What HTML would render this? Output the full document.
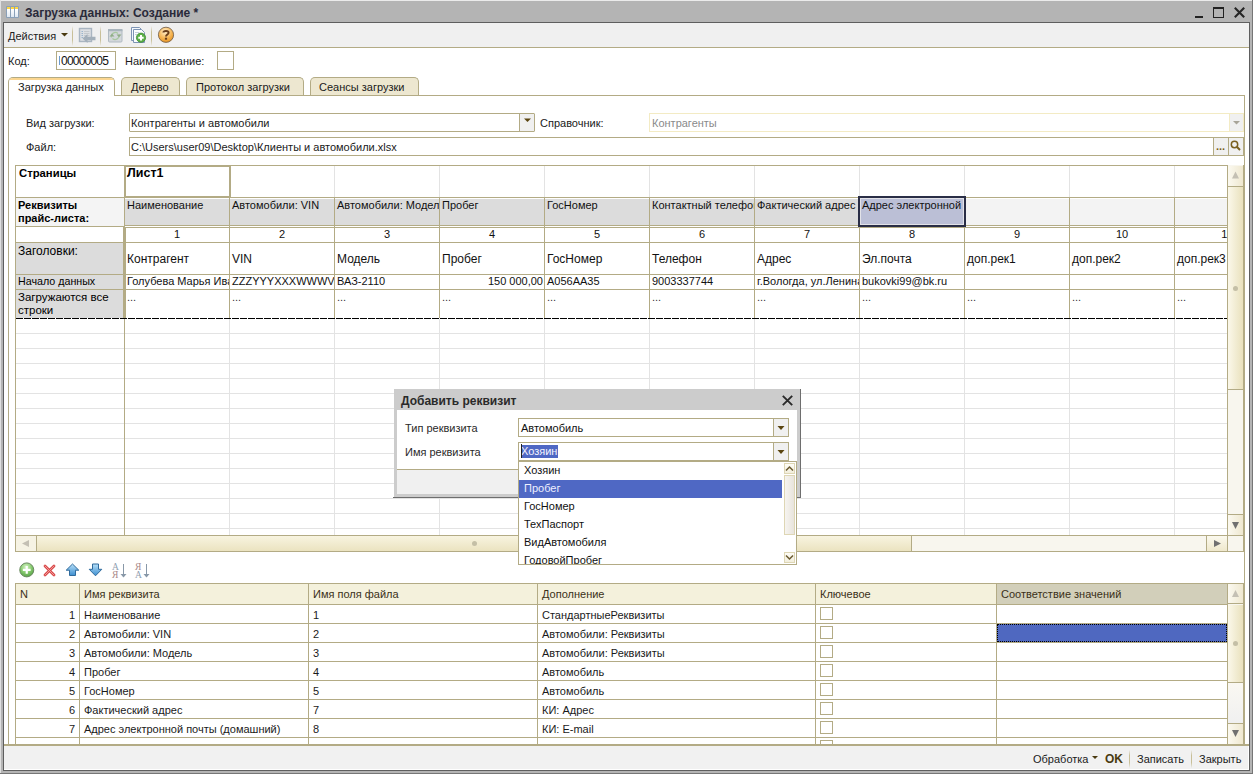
<!DOCTYPE html>
<html><head><meta charset="utf-8">
<style>
*{box-sizing:border-box;margin:0;padding:0}
html,body{width:1253px;height:774px;overflow:hidden}
body{position:relative;background:#b4b4b4;font-family:"Liberation Sans",sans-serif;font-size:11px;color:#1a1a1a}
.a{position:absolute}
.t{position:absolute;white-space:nowrap;line-height:11px;font-size:11px}
.b{border:1px solid #b3ab85}
.hl{position:absolute;height:1px;background:#b3ab85}
.vl{position:absolute;width:1px;background:#b3ab85}
.gh{position:absolute;height:1px;background:#e3e3e3}
.gv{position:absolute;width:1px;background:#e3e3e3}
.ddb{position:absolute;background:#f0f0f0;border-left:1px solid #b3ab85}
.tri{position:absolute;width:0;height:0;border-left:4px solid transparent;border-right:4px solid transparent;border-top:4px solid #5a4a10}
.sep{position:absolute;width:1px;background:linear-gradient(#f0f0f0,#c8bf98 30%,#c8bf98 70%,#f0f0f0)}
.tab{position:absolute;height:18px;border:1px solid #b3ab85;border-bottom:none;border-radius:5px 5px 0 0;background:#ede7d0}
</style></head><body>
<!-- window frame -->
<div class="a" style="left:0;top:0;width:1253px;height:1px;background:#ebebeb"></div>
<div class="a" style="left:0;top:0;width:1px;height:774px;background:#e0e0e0"></div>
<div class="a" style="left:1252px;top:0;width:1px;height:774px;background:#767676"></div>
<div class="a" style="left:0;top:773px;width:1253px;height:1px;background:#767676"></div>
<!-- title icon -->
<div class="a" style="left:6px;top:6px;width:13px;height:12px;background:#8aa0b8;border-radius:1px"></div>
<div class="a" style="left:7px;top:7px;width:3px;height:10px;background:linear-gradient(#ffd640 0,#ffd640 2px,#ffffff 2px,#dfe8f2)"></div>
<div class="a" style="left:11px;top:7px;width:3px;height:10px;background:linear-gradient(#ffd640 0,#ffd640 2px,#ffffff 2px,#dfe8f2)"></div>
<div class="a" style="left:15px;top:7px;width:3px;height:10px;background:linear-gradient(#ffd640 0,#ffd640 2px,#ffffff 2px,#dfe8f2)"></div>
<div class="t" style="left:25px;top:7px;font-size:12px;line-height:12px;font-weight:bold;color:#2a2a3a">Загрузка данных: Создание *</div>
<!-- window buttons -->
<div class="a" style="left:1195px;top:16px;width:8px;height:2px;background:#222"></div>
<div class="a" style="left:1213px;top:7px;width:11px;height:11px;border:1px solid #222;border-top-width:2px"></div>
<svg class="a" style="left:1233px;top:6px" width="13" height="13" viewBox="0 0 13 13"><path d="M1.8 1.8L11.2 11.2M11.2 1.8L1.8 11.2" stroke="#262626" stroke-width="2.1"/></svg>

<!-- content area -->
<div class="a" style="left:3px;top:22px;width:1247px;height:749px;border:1px solid #5e5e5e;background:#fff"></div>
<!-- toolbar -->
<div class="a" style="left:4px;top:23px;width:1245px;height:24px;background:#f0f0f0"></div>
<div class="hl" style="left:4px;top:47px;width:1245px"></div>
<div class="t" style="left:8px;top:31px;color:#222">Действия</div>
<svg class="a" style="left:61px;top:33px" width="9" height="5"><polygon points="0,0 7,0 3.5,3.5" fill="#4a3a10"/></svg>
<div class="sep" style="left:72px;top:26px;height:20px"></div>
<div class="sep" style="left:100px;top:26px;height:20px"></div>
<div class="sep" style="left:151px;top:26px;height:20px"></div>
<!-- icon 1 -->
<svg class="a" style="left:78px;top:27px" width="19" height="17" viewBox="0 0 19 17">
<rect x="1.5" y="1.5" width="12" height="13" fill="#dcdfe3" stroke="#a9b5c1" stroke-width="1.4"/>
<path d="M3.5 4.5h1.5M3.5 6.5h1.5M3.5 8.5h1.5M3.5 10.5h1.5" stroke="#9ab4cc" stroke-width="1"/>
<path d="M6 4.5h5.5M6 6.5h5.5M6 8.5h5.5" stroke="#c4c8cc" stroke-width="1"/>
<path d="M4.5 11.5L9.5 7V9.8H17.5V13.2H9.5V16Z" fill="#a3afba"/>
</svg>
<!-- icon 2 -->
<svg class="a" style="left:107px;top:28px" width="17" height="15" viewBox="0 0 17 15">
<rect x="1.5" y="1.5" width="13.5" height="12.5" rx="1" fill="#d3d7db" stroke="#b0bac2" stroke-width="1"/>
<rect x="1" y="1" width="14.5" height="2.2" fill="#a9b5bd"/>
<path d="M4.5 9.5A4 4 0 0 1 11 5.5M12 6.5A4 4 0 0 1 5.5 10.5" fill="none" stroke="#a8c8a0" stroke-width="1.2"/>
<path d="M2.5 8.5L5 5.8L7.5 8.5Z M9.5 6.5L12 9.2L14.5 6.5Z" fill="#90ac88"/>
</svg>
<!-- icon 3 -->
<svg class="a" style="left:130px;top:26px" width="18" height="18" viewBox="0 0 18 18">
<path d="M1.5 1.5H9.5L11 3V14.5H1.5Z" fill="#f4f8fc" stroke="#7d94b4" stroke-width="1"/>
<path d="M3.5 3.5H11.5L14.5 6.5V16.5H3.5Z" fill="#fbfdff" stroke="#7d94b4" stroke-width="1"/>
<path d="M5 6.5h4M5 8.5h2" stroke="#b8c4d0" stroke-width="0.8"/>
<circle cx="11" cy="11.7" r="4.6" fill="#5cb048" stroke="#3e8a34" stroke-width="0.8"/>
<path d="M11 9v5.4M8.3 11.7h5.4" stroke="#fff" stroke-width="2"/>
</svg>
<!-- help -->
<svg class="a" style="left:157px;top:26px" width="18" height="18" viewBox="0 0 18 18">
<defs><radialGradient id="hg" cx="45%" cy="30%" r="70%"><stop offset="0" stop-color="#fff0d0"/><stop offset="0.55" stop-color="#f8bc60"/><stop offset="1" stop-color="#e89420"/></radialGradient></defs>
<circle cx="9" cy="8.8" r="7.6" fill="url(#hg)" stroke="#7a6650" stroke-width="0.9"/>
<path d="M6.4 6.6C6.4 4.6 11.6 4.4 11.6 6.8C11.6 8.6 9 8.6 9 10.6" fill="none" stroke="#6a3e1a" stroke-width="1.9"/>
<rect x="7.9" y="11.7" width="2.2" height="2" fill="#6a3e1a"/>
</svg>

<!-- code row -->
<div class="t" style="left:8px;top:56px">Код:</div>
<div class="a b" style="left:56px;top:51px;width:60px;height:19px"></div>
<div class="t" style="left:61px;top:55px;font-size:12px;line-height:12px;color:#111;letter-spacing:-0.78px">00000005</div>
<div class="a" style="left:59px;top:56px;width:1px;height:9px;background:#6a9ad0"></div>
<div class="t" style="left:125px;top:56px">Наименование:</div>
<div class="a b" style="left:217px;top:51px;width:17px;height:19px"></div>

<!-- tabs -->
<div class="tab" style="left:121px;top:77px;width:59px"></div>
<div class="tab" style="left:186px;top:77px;width:118px"></div>
<div class="tab" style="left:310px;top:77px;width:109px"></div>
<div class="hl" style="left:8px;top:95px;width:1237px"></div>
<div class="tab" style="left:8px;top:77px;width:107px;height:19px;background:#fff;overflow:hidden"><div class="a" style="left:0;top:0;width:105px;height:2px;background:#fbd690"></div></div>
<div class="t" style="left:18px;top:82px">Загрузка данных</div>
<div class="t" style="left:131px;top:82px">Дерево</div>
<div class="t" style="left:196px;top:82px">Протокол загрузки</div>
<div class="t" style="left:319px;top:82px">Сеансы загрузки</div>
<!-- pane borders -->
<div class="vl" style="left:8px;top:95px;height:651px"></div>
<div class="vl" style="left:1244px;top:95px;height:651px"></div>
<div class="a" style="left:4px;top:744px;width:1245px;height:2px;background:#b3ab85"></div>
<!-- bottom bar -->
<div class="a" style="left:4px;top:746px;width:1245px;height:24px;background:#f1f1f1;border-right:1px solid #fff;border-bottom:1px solid #fff"></div>
<div class="t" style="left:1033px;top:754px">Обработка</div>
<svg class="a" style="left:1092px;top:756px" width="8" height="5"><polygon points="0,0 6,0 3,3" fill="#4a3a10"/></svg>
<div class="t" style="left:1105px;top:753px;font-weight:bold;font-size:12px;line-height:12px;color:#4a3a10">OK</div>
<div class="sep" style="left:1129px;top:750px;height:18px"></div>
<div class="t" style="left:1137px;top:754px">Записать</div>
<div class="sep" style="left:1191px;top:750px;height:18px"></div>
<div class="t" style="left:1199px;top:754px">Закрыть</div>

<!-- form rows -->
<div class="t" style="left:26px;top:118px">Вид загрузки:</div>
<div class="a b" style="left:129px;top:113px;width:406px;height:19px;border-radius:1px"></div>
<div class="ddb" style="left:519px;top:114px;width:15px;height:17px"></div>
<svg class="a" style="left:524px;top:118px" width="9" height="6"><polygon points="0,0.5 7,0.5 3.5,4" fill="#5a4510"/></svg>
<div class="t" style="left:131px;top:118px">Контрагенты и автомобили</div>
<div class="t" style="left:540px;top:118px">Справочник:</div>
<div class="a" style="left:649px;top:113px;width:595px;height:19px;border:1px solid #f3ebc4"></div>
<div class="a" style="left:1229px;top:114px;width:14px;height:17px;background:#f0f0f0;border-left:1px solid #f3ebc4"></div>
<svg class="a" style="left:1233px;top:121px" width="9" height="5"><polygon points="0,0 7,0 3.5,3.5" fill="#a8a498"/></svg>
<div class="t" style="left:652px;top:118px;color:#8a8a8a">Контрагенты</div>
<div class="t" style="left:26px;top:142px">Файл:</div>
<div class="a b" style="left:129px;top:137px;width:1115px;height:19px"></div>
<div class="ddb" style="left:1213px;top:138px;width:15px;height:17px"></div>
<div class="ddb" style="left:1228px;top:138px;width:15px;height:17px"></div>
<div class="t" style="left:1216px;top:141px;color:#7a6020;font-weight:bold">...</div>
<svg class="a" style="left:1230px;top:140px" width="11" height="11" viewBox="0 0 11 11"><circle cx="4.5" cy="4.5" r="3.2" fill="none" stroke="#7a6020" stroke-width="1.5"/><path d="M6.8 6.8L10 10" stroke="#7a6020" stroke-width="2"/></svg>
<div class="t" style="left:131px;top:142px">C:\Users\user09\Desktop\Клиенты и автомобили.xlsx</div>

<div class="a" style="left:15px;top:165px;width:1229px;height:387px;background:#fff;border:1px solid #b3ab85"></div>
<div class="a" style="left:16px;top:198px;width:108px;height:28px;background:#f4f4f4;"></div>
<div class="a" style="left:125px;top:199px;width:734px;height:26px;background:#dcdcdc;"></div>
<div class="a" style="left:965px;top:199px;width:262px;height:26px;background:#f3f3f3;"></div>
<div class="a" style="left:16px;top:243px;width:107px;height:31px;background:#dcdcdc;"></div>
<div class="a" style="left:16px;top:275px;width:107px;height:14px;background:#dcdcdc;"></div>
<div class="a" style="left:16px;top:290px;width:107px;height:28px;background:#dcdcdc;"></div>
<div class="a" style="left:16px;top:333px;width:1211px;height:1px;background:#e3e3e3;"></div>
<div class="a" style="left:16px;top:348px;width:1211px;height:1px;background:#e3e3e3;"></div>
<div class="a" style="left:16px;top:363px;width:1211px;height:1px;background:#e3e3e3;"></div>
<div class="a" style="left:16px;top:378px;width:1211px;height:1px;background:#e3e3e3;"></div>
<div class="a" style="left:16px;top:393px;width:1211px;height:1px;background:#e3e3e3;"></div>
<div class="a" style="left:16px;top:408px;width:1211px;height:1px;background:#e3e3e3;"></div>
<div class="a" style="left:16px;top:423px;width:1211px;height:1px;background:#e3e3e3;"></div>
<div class="a" style="left:16px;top:438px;width:1211px;height:1px;background:#e3e3e3;"></div>
<div class="a" style="left:16px;top:453px;width:1211px;height:1px;background:#e3e3e3;"></div>
<div class="a" style="left:16px;top:468px;width:1211px;height:1px;background:#e3e3e3;"></div>
<div class="a" style="left:16px;top:483px;width:1211px;height:1px;background:#e3e3e3;"></div>
<div class="a" style="left:16px;top:498px;width:1211px;height:1px;background:#e3e3e3;"></div>
<div class="a" style="left:16px;top:513px;width:1211px;height:1px;background:#e3e3e3;"></div>
<div class="a" style="left:16px;top:528px;width:1211px;height:1px;background:#e3e3e3;"></div>
<div class="a" style="left:334px;top:166px;width:1px;height:31px;background:#e3e3e3;"></div>
<div class="a" style="left:334px;top:319px;width:1px;height:216px;background:#e3e3e3;"></div>
<div class="a" style="left:439px;top:166px;width:1px;height:31px;background:#e3e3e3;"></div>
<div class="a" style="left:439px;top:319px;width:1px;height:216px;background:#e3e3e3;"></div>
<div class="a" style="left:544px;top:166px;width:1px;height:31px;background:#e3e3e3;"></div>
<div class="a" style="left:544px;top:319px;width:1px;height:216px;background:#e3e3e3;"></div>
<div class="a" style="left:649px;top:166px;width:1px;height:31px;background:#e3e3e3;"></div>
<div class="a" style="left:649px;top:319px;width:1px;height:216px;background:#e3e3e3;"></div>
<div class="a" style="left:754px;top:166px;width:1px;height:31px;background:#e3e3e3;"></div>
<div class="a" style="left:754px;top:319px;width:1px;height:216px;background:#e3e3e3;"></div>
<div class="a" style="left:859px;top:166px;width:1px;height:31px;background:#e3e3e3;"></div>
<div class="a" style="left:859px;top:319px;width:1px;height:216px;background:#e3e3e3;"></div>
<div class="a" style="left:964px;top:166px;width:1px;height:31px;background:#e3e3e3;"></div>
<div class="a" style="left:964px;top:319px;width:1px;height:216px;background:#e3e3e3;"></div>
<div class="a" style="left:1069px;top:166px;width:1px;height:31px;background:#e3e3e3;"></div>
<div class="a" style="left:1069px;top:319px;width:1px;height:216px;background:#e3e3e3;"></div>
<div class="a" style="left:1174px;top:166px;width:1px;height:31px;background:#e3e3e3;"></div>
<div class="a" style="left:1174px;top:319px;width:1px;height:216px;background:#e3e3e3;"></div>
<div class="a" style="left:124px;top:319px;width:1px;height:216px;background:#b3ab85;"></div>
<div class="a" style="left:229px;top:319px;width:1px;height:216px;background:#e3e3e3;"></div>
<div class="a" style="left:16px;top:197px;width:1211px;height:1px;background:#b3ab85;"></div>
<div class="a" style="left:124px;top:225px;width:1103px;height:1px;background:#b3ab85;"></div>
<div class="a" style="left:124px;top:227px;width:1103px;height:1px;background:#b3ab85;"></div>
<div class="a" style="left:16px;top:226px;width:108px;height:1px;background:#b3ab85;"></div>
<div class="a" style="left:16px;top:242px;width:1211px;height:1px;background:#b3ab85;"></div>
<div class="a" style="left:16px;top:274px;width:1211px;height:1px;background:#b3ab85;"></div>
<div class="a" style="left:16px;top:289px;width:1211px;height:1px;background:#b3ab85;"></div>
<div class="a" style="left:229px;top:197px;width:1px;height:121px;background:#b3ab85;"></div>
<div class="a" style="left:334px;top:197px;width:1px;height:121px;background:#b3ab85;"></div>
<div class="a" style="left:439px;top:197px;width:1px;height:121px;background:#b3ab85;"></div>
<div class="a" style="left:544px;top:197px;width:1px;height:121px;background:#b3ab85;"></div>
<div class="a" style="left:649px;top:197px;width:1px;height:121px;background:#b3ab85;"></div>
<div class="a" style="left:754px;top:197px;width:1px;height:121px;background:#b3ab85;"></div>
<div class="a" style="left:859px;top:197px;width:1px;height:121px;background:#b3ab85;"></div>
<div class="a" style="left:964px;top:197px;width:1px;height:121px;background:#b3ab85;"></div>
<div class="a" style="left:1069px;top:197px;width:1px;height:121px;background:#b3ab85;"></div>
<div class="a" style="left:1174px;top:197px;width:1px;height:121px;background:#b3ab85;"></div>
<div class="a" style="left:124px;top:166px;width:1px;height:31px;background:#b3ab85;"></div>
<div class="a" style="left:123px;top:227px;width:3px;height:91px;background:#b3ab85;"></div>
<div class="a" style="left:124px;top:197px;width:1px;height:30px;background:#b3ab85;"></div>
<div class="a" style="left:124px;top:165px;width:107px;height:2px;background:#b3ab85;"></div>
<div class="a" style="left:124px;top:196px;width:107px;height:2px;background:#b3ab85;"></div>
<div class="a" style="left:124px;top:165px;width:2px;height:33px;background:#b3ab85;"></div>
<div class="a" style="left:229px;top:165px;width:2px;height:33px;background:#b3ab85;"></div>
<div class="a" style="left:16px;top:318px;width:1211px;height:1px;background:repeating-linear-gradient(90deg,#000 0,#000 7px,transparent 7px,transparent 8px)"></div>
<div class="a" style="left:858px;top:196px;width:108px;height:31px;background:#bbbfd6;border:2px solid #2a2e46;box-shadow:inset 0 0 0 1px #e2e2e8"></div>
<div class="t" style="left:19px;top:168.43px;font-size:11.3px;line-height:11.3px;font-weight:bold;color:#000;">Страницы</div>
<div class="t" style="left:18px;top:199.69px;font-size:11px;line-height:11px;font-weight:bold;color:#000;">Реквизиты</div>
<div class="t" style="left:18px;top:212.69px;font-size:11px;line-height:11px;font-weight:bold;color:#000;">прайс-листа:</div>
<div class="t" style="left:18px;top:244.84px;font-size:12px;line-height:12px;color:#000;">Заголовки:</div>
<div class="t" style="left:18px;top:276.44px;font-size:10.7px;line-height:10.7px;color:#000;">Начало данных</div>
<div class="t" style="left:18px;top:292.27px;font-size:11.5px;line-height:11.5px;color:#000;">Загружаются все</div>
<div class="t" style="left:18px;top:304.77px;font-size:11.5px;line-height:11.5px;color:#000;">строки</div>
<div class="t" style="left:127px;top:167.42px;font-size:12.5px;line-height:12.5px;font-weight:bold;color:#000;">Лист1</div>
<div class="a" style="left:125px;top:199px;width:104px;height:26px;overflow:hidden">
<div class="t" style="left:2px;top:0.69px;color:#111">Наименование</div>
</div>
<div class="a" style="left:230px;top:199px;width:104px;height:26px;overflow:hidden">
<div class="t" style="left:2px;top:0.69px;color:#111">Автомобили: VIN</div>
</div>
<div class="a" style="left:335px;top:199px;width:104px;height:26px;overflow:hidden">
<div class="t" style="left:2px;top:0.69px;color:#111">Автомобили: Модель</div>
</div>
<div class="a" style="left:440px;top:199px;width:104px;height:26px;overflow:hidden">
<div class="t" style="left:2px;top:0.69px;color:#111">Пробег</div>
</div>
<div class="a" style="left:545px;top:199px;width:104px;height:26px;overflow:hidden">
<div class="t" style="left:2px;top:0.69px;color:#111">ГосНомер</div>
</div>
<div class="a" style="left:650px;top:199px;width:104px;height:26px;overflow:hidden">
<div class="t" style="left:2px;top:0.69px;color:#111">Контактный телефон</div>
</div>
<div class="a" style="left:755px;top:199px;width:104px;height:26px;overflow:hidden">
<div class="t" style="left:2px;top:0.69px;color:#111">Фактический адрес</div>
</div>
<div class="a" style="left:860px;top:199px;width:104px;height:26px;overflow:hidden">
<div class="t" style="left:2px;top:0.69px;color:#111">Адрес электронной почты</div>
</div>
<div class="a" style="left:125px;top:228px;width:104px;height:14px;overflow:hidden">
<div class="t" style="left:0;width:104px;text-align:center;top:0.69px;color:#111">1</div>
</div>
<div class="a" style="left:125px;top:243px;width:104px;height:31px;overflow:hidden">
<div class="t" style="left:2px;top:9.84px;font-size:12px;line-height:12px;color:#111">Контрагент</div>
</div>
<div class="a" style="left:125px;top:290px;width:104px;height:28px;overflow:hidden">
<div class="t" style="left:2px;top:1.69px;color:#333">...</div>
</div>
<div class="a" style="left:230px;top:228px;width:104px;height:14px;overflow:hidden">
<div class="t" style="left:0;width:104px;text-align:center;top:0.69px;color:#111">2</div>
</div>
<div class="a" style="left:230px;top:243px;width:104px;height:31px;overflow:hidden">
<div class="t" style="left:2px;top:9.84px;font-size:12px;line-height:12px;color:#111">VIN</div>
</div>
<div class="a" style="left:230px;top:290px;width:104px;height:28px;overflow:hidden">
<div class="t" style="left:2px;top:1.69px;color:#333">...</div>
</div>
<div class="a" style="left:335px;top:228px;width:104px;height:14px;overflow:hidden">
<div class="t" style="left:0;width:104px;text-align:center;top:0.69px;color:#111">3</div>
</div>
<div class="a" style="left:335px;top:243px;width:104px;height:31px;overflow:hidden">
<div class="t" style="left:2px;top:9.84px;font-size:12px;line-height:12px;color:#111">Модель</div>
</div>
<div class="a" style="left:335px;top:290px;width:104px;height:28px;overflow:hidden">
<div class="t" style="left:2px;top:1.69px;color:#333">...</div>
</div>
<div class="a" style="left:440px;top:228px;width:104px;height:14px;overflow:hidden">
<div class="t" style="left:0;width:104px;text-align:center;top:0.69px;color:#111">4</div>
</div>
<div class="a" style="left:440px;top:243px;width:104px;height:31px;overflow:hidden">
<div class="t" style="left:2px;top:9.84px;font-size:12px;line-height:12px;color:#111">Пробег</div>
</div>
<div class="a" style="left:440px;top:290px;width:104px;height:28px;overflow:hidden">
<div class="t" style="left:2px;top:1.69px;color:#333">...</div>
</div>
<div class="a" style="left:545px;top:228px;width:104px;height:14px;overflow:hidden">
<div class="t" style="left:0;width:104px;text-align:center;top:0.69px;color:#111">5</div>
</div>
<div class="a" style="left:545px;top:243px;width:104px;height:31px;overflow:hidden">
<div class="t" style="left:2px;top:9.84px;font-size:12px;line-height:12px;color:#111">ГосНомер</div>
</div>
<div class="a" style="left:545px;top:290px;width:104px;height:28px;overflow:hidden">
<div class="t" style="left:2px;top:1.69px;color:#333">...</div>
</div>
<div class="a" style="left:650px;top:228px;width:104px;height:14px;overflow:hidden">
<div class="t" style="left:0;width:104px;text-align:center;top:0.69px;color:#111">6</div>
</div>
<div class="a" style="left:650px;top:243px;width:104px;height:31px;overflow:hidden">
<div class="t" style="left:2px;top:9.84px;font-size:12px;line-height:12px;color:#111">Телефон</div>
</div>
<div class="a" style="left:650px;top:290px;width:104px;height:28px;overflow:hidden">
<div class="t" style="left:2px;top:1.69px;color:#333">...</div>
</div>
<div class="a" style="left:755px;top:228px;width:104px;height:14px;overflow:hidden">
<div class="t" style="left:0;width:104px;text-align:center;top:0.69px;color:#111">7</div>
</div>
<div class="a" style="left:755px;top:243px;width:104px;height:31px;overflow:hidden">
<div class="t" style="left:2px;top:9.84px;font-size:12px;line-height:12px;color:#111">Адрес</div>
</div>
<div class="a" style="left:755px;top:290px;width:104px;height:28px;overflow:hidden">
<div class="t" style="left:2px;top:1.69px;color:#333">...</div>
</div>
<div class="a" style="left:860px;top:228px;width:104px;height:14px;overflow:hidden">
<div class="t" style="left:0;width:104px;text-align:center;top:0.69px;color:#111">8</div>
</div>
<div class="a" style="left:860px;top:243px;width:104px;height:31px;overflow:hidden">
<div class="t" style="left:2px;top:9.84px;font-size:12px;line-height:12px;color:#111">Эл.почта</div>
</div>
<div class="a" style="left:860px;top:290px;width:104px;height:28px;overflow:hidden">
<div class="t" style="left:2px;top:1.69px;color:#333">...</div>
</div>
<div class="a" style="left:965px;top:228px;width:104px;height:14px;overflow:hidden">
<div class="t" style="left:0;width:104px;text-align:center;top:0.69px;color:#111">9</div>
</div>
<div class="a" style="left:965px;top:243px;width:104px;height:31px;overflow:hidden">
<div class="t" style="left:2px;top:9.84px;font-size:12px;line-height:12px;color:#111">доп.рек1</div>
</div>
<div class="a" style="left:965px;top:290px;width:104px;height:28px;overflow:hidden">
<div class="t" style="left:2px;top:1.69px;color:#333">...</div>
</div>
<div class="a" style="left:1070px;top:228px;width:104px;height:14px;overflow:hidden">
<div class="t" style="left:0;width:104px;text-align:center;top:0.69px;color:#111">10</div>
</div>
<div class="a" style="left:1070px;top:243px;width:104px;height:31px;overflow:hidden">
<div class="t" style="left:2px;top:9.84px;font-size:12px;line-height:12px;color:#111">доп.рек2</div>
</div>
<div class="a" style="left:1070px;top:290px;width:104px;height:28px;overflow:hidden">
<div class="t" style="left:2px;top:1.69px;color:#333">...</div>
</div>
<div class="a" style="left:1175px;top:228px;width:52px;height:14px;overflow:hidden">
<div class="t" style="left:0;width:104px;text-align:center;top:0.69px;color:#111">11</div>
</div>
<div class="a" style="left:1175px;top:243px;width:52px;height:31px;overflow:hidden">
<div class="t" style="left:2px;top:9.84px;font-size:12px;line-height:12px;color:#111">доп.рек3</div>
</div>
<div class="a" style="left:1175px;top:290px;width:52px;height:28px;overflow:hidden">
<div class="t" style="left:2px;top:1.69px;color:#333">...</div>
</div>
<div class="a" style="left:125px;top:275px;width:104px;height:14px;overflow:hidden">
<div class="t" style="left:2px;top:1.19px;color:#111">Голубева Марья Ивановна</div>
</div>
<div class="a" style="left:230px;top:275px;width:104px;height:14px;overflow:hidden">
<div class="t" style="left:2px;top:1.19px;color:#111">ZZZYYYXXXWWWVVV</div>
</div>
<div class="a" style="left:335px;top:275px;width:104px;height:14px;overflow:hidden">
<div class="t" style="left:2px;top:1.19px;color:#111">ВАЗ-2110</div>
</div>
<div class="a" style="left:440px;top:275px;width:104px;height:14px;overflow:hidden">
<div class="t" style="right:1px;top:1.19px;color:#111">150 000,00</div>
</div>
<div class="a" style="left:545px;top:275px;width:104px;height:14px;overflow:hidden">
<div class="t" style="left:2px;top:1.19px;color:#111">А056АА35</div>
</div>
<div class="a" style="left:650px;top:275px;width:104px;height:14px;overflow:hidden">
<div class="t" style="left:2px;top:1.19px;color:#111">9003337744</div>
</div>
<div class="a" style="left:755px;top:275px;width:104px;height:14px;overflow:hidden">
<div class="t" style="left:2px;top:1.19px;color:#111">г.Вологда, ул.Ленина, 1</div>
</div>
<div class="a" style="left:860px;top:275px;width:104px;height:14px;overflow:hidden">
<div class="t" style="left:2px;top:1.19px;color:#111">bukovki99@bk.ru</div>
</div>
<div class="a" style="left:1227px;top:165px;width:17px;height:371px;background:#f8f6ee;border-left:1px solid #b3ab85;border-right:1px solid #b3ab85"></div>
<div class="a" style="left:1228px;top:166px;width:15px;height:21px;background:linear-gradient(90deg,#fbf9f0,#efe8d0);border-bottom:1px solid #b3ab85"></div>
<svg class="a" style="left:1232px;top:171px" width="9" height="9"><polygon points="0,7.5 7,7.5 3.5,0.5" fill="#c4c0b4"/></svg>
<div class="a" style="left:1228px;top:187px;width:15px;height:203px;background:linear-gradient(90deg,#fbf8ea,#e9e1bd);border-bottom:1px solid #b3ab85"></div>
<div class="a" style="left:1228px;top:514px;width:15px;height:21px;background:linear-gradient(90deg,#fbf9f0,#efe8d0);border-top:1px solid #b3ab85"></div>
<svg class="a" style="left:1232px;top:522px" width="9" height="9"><polygon points="0,0 7,0 3.5,7" fill="#707070"/></svg>
<div class="a" style="left:15px;top:535px;width:1229px;height:17px;background:#f8f6ee;border:1px solid #b3ab85"></div>
<div class="a" style="left:16px;top:536px;width:21px;height:15px;background:#f6f3e4;border-right:1px solid #b3ab85"></div>
<svg class="a" style="left:22px;top:540px" width="9" height="9"><polygon points="7,0 7,7 0,3.5" fill="#c4c0b4"/></svg>
<div class="a" style="left:37px;top:536px;width:875px;height:15px;background:linear-gradient(#f8f4e0,#ebe3c0);border-right:1px solid #b3ab85"></div>
<div class="a" style="left:1206px;top:536px;width:21px;height:15px;background:linear-gradient(#fbf9ee,#efe8cc);border-left:1px solid #b3ab85"></div>
<svg class="a" style="left:1214px;top:540px" width="9" height="9"><polygon points="0,0 0,7 7,3.5" fill="#707070"/></svg>
<div class="a" style="left:1227px;top:536px;width:16px;height:15px;background:#f8f6ee;border-left:1px solid #b3ab85"></div>
<div class="a" style="left:472px;top:541px;width:5px;height:5px;background:#c4bfa6;border-radius:50%"></div>
<div class="a" style="left:1233px;top:286px;width:5px;height:5px;background:#c4bfa6;border-radius:50%"></div>

<svg class="a" style="left:18px;top:561px" width="18" height="18" viewBox="0 0 18 18"><defs><radialGradient id="gp" cx="45%" cy="30%" r="70%"><stop offset="0" stop-color="#d8f4c8"/><stop offset="0.55" stop-color="#88cc70"/><stop offset="1" stop-color="#58a048"/></radialGradient></defs><circle cx="8.75" cy="8.9" r="7" fill="url(#gp)" stroke="#6a8a60" stroke-width="1"/><path d="M8.75 5v7.8M4.85 8.9h7.8" stroke="#fff" stroke-width="2.2"/></svg>
<svg class="a" style="left:43px;top:564px" width="14" height="14" viewBox="0 0 14 14"><path d="M2 2L11 11M11 2L2 11" stroke="#d84848" stroke-width="2.8" stroke-linecap="round"/><path d="M2 2L11 11M11 2L2 11" stroke="#f4a0a0" stroke-width="0.9" stroke-linecap="round"/></svg>
<svg class="a" style="left:65px;top:563px" width="15" height="14" viewBox="0 0 15 14"><defs><linearGradient id="ba" x1="0" y1="0" x2="0" y2="1"><stop offset="0" stop-color="#b8e0f8"/><stop offset="1" stop-color="#3c8ed0"/></linearGradient></defs><path d="M7.5 1L13.8 7.2H10.5V12.5H4.5V7.2H1.2Z" fill="url(#ba)" stroke="#2f6a9c" stroke-width="1"/></svg>
<svg class="a" style="left:88px;top:563px" width="15" height="14" viewBox="0 0 15 14"><defs><linearGradient id="bb" x1="0" y1="0" x2="0" y2="1"><stop offset="0" stop-color="#b8e0f8"/><stop offset="1" stop-color="#3c8ed0"/></linearGradient></defs><path d="M7.5 12.8L13.8 6.3H10.5V1H4.5V6.3H1.2Z" fill="url(#bb)" stroke="#2f6a9c" stroke-width="1"/></svg>
<svg class="a" style="left:111px;top:561px" width="18" height="19" viewBox="0 0 18 19"><text x="1" y="9" font-family="Liberation Serif" font-size="9.5" fill="#90a0b0">A</text><text x="1" y="17" font-family="Liberation Serif" font-size="9.5" fill="#a88888">Я</text><path d="M12.5 3v11" stroke="#8898a8" stroke-width="1"/><path d="M9.5 13L12.5 16.5L15.5 13Z" fill="#8898a8"/></svg>
<svg class="a" style="left:134px;top:561px" width="18" height="19" viewBox="0 0 18 19"><text x="1" y="9" font-family="Liberation Serif" font-size="9.5" fill="#a88888">Я</text><text x="1" y="17" font-family="Liberation Serif" font-size="9.5" fill="#90a0b0">A</text><path d="M12.5 3v11" stroke="#8898a8" stroke-width="1"/><path d="M9.5 13L12.5 16.5L15.5 13Z" fill="#8898a8"/></svg>
<div class="a" style="left:15px;top:583px;width:1229px;height:163px;background:#fff;border:1px solid #b3ab85;border-bottom:none"></div>
<div class="a" style="left:16px;top:584px;width:980px;height:20px;background:#f4f1dc;"></div>
<div class="a" style="left:997px;top:584px;width:230px;height:20px;background:#d2cfba;"></div>
<div class="a" style="left:16px;top:604px;width:1211px;height:1px;background:#b3ab85;"></div>
<div class="a" style="left:16px;top:623px;width:1211px;height:1px;background:#b3ab85;"></div>
<div class="a" style="left:16px;top:642px;width:1211px;height:1px;background:#b3ab85;"></div>
<div class="a" style="left:16px;top:661px;width:1211px;height:1px;background:#b3ab85;"></div>
<div class="a" style="left:16px;top:680px;width:1211px;height:1px;background:#b3ab85;"></div>
<div class="a" style="left:16px;top:699px;width:1211px;height:1px;background:#b3ab85;"></div>
<div class="a" style="left:16px;top:718px;width:1211px;height:1px;background:#b3ab85;"></div>
<div class="a" style="left:16px;top:737px;width:1211px;height:1px;background:#b3ab85;"></div>
<div class="a" style="left:79px;top:584px;width:1px;height:161px;background:#b3ab85;"></div>
<div class="a" style="left:308px;top:584px;width:1px;height:161px;background:#b3ab85;"></div>
<div class="a" style="left:537px;top:584px;width:1px;height:161px;background:#b3ab85;"></div>
<div class="a" style="left:815px;top:584px;width:1px;height:161px;background:#b3ab85;"></div>
<div class="a" style="left:996px;top:584px;width:1px;height:161px;background:#b3ab85;"></div>
<div class="t" style="left:20px;top:588.69px;font-size:11px;line-height:11px;color:#3a3018;">N</div>
<div class="t" style="left:84px;top:588.69px;font-size:11px;line-height:11px;color:#3a3018;">Имя реквизита</div>
<div class="t" style="left:313px;top:588.69px;font-size:11px;line-height:11px;color:#3a3018;">Имя поля файла</div>
<div class="t" style="left:542px;top:588.69px;font-size:11px;line-height:11px;color:#3a3018;">Дополнение</div>
<div class="t" style="left:820px;top:588.69px;font-size:11px;line-height:11px;color:#3a3018;">Ключевое</div>
<div class="t" style="left:1001px;top:588.69px;font-size:11px;line-height:11px;color:#3a3018;">Соответствие значений</div>
<div class="t" style="left:16px;width:59px;text-align:right;top:609.69px">1</div>
<div class="t" style="left:84px;top:609.69px;font-size:11px;line-height:11px;">Наименование</div>
<div class="t" style="left:313px;top:609.69px;font-size:11px;line-height:11px;">1</div>
<div class="t" style="left:542px;top:609.69px;font-size:11px;line-height:11px;">СтандартныеРеквизиты</div>
<div class="t" style="left:16px;width:59px;text-align:right;top:628.69px">2</div>
<div class="t" style="left:84px;top:628.69px;font-size:11px;line-height:11px;">Автомобили: VIN</div>
<div class="t" style="left:313px;top:628.69px;font-size:11px;line-height:11px;">2</div>
<div class="t" style="left:542px;top:628.69px;font-size:11px;line-height:11px;">Автомобили: Реквизиты</div>
<div class="t" style="left:16px;width:59px;text-align:right;top:647.69px">3</div>
<div class="t" style="left:84px;top:647.69px;font-size:11px;line-height:11px;">Автомобили: Модель</div>
<div class="t" style="left:313px;top:647.69px;font-size:11px;line-height:11px;">3</div>
<div class="t" style="left:542px;top:647.69px;font-size:11px;line-height:11px;">Автомобили: Реквизиты</div>
<div class="t" style="left:16px;width:59px;text-align:right;top:666.69px">4</div>
<div class="t" style="left:84px;top:666.69px;font-size:11px;line-height:11px;">Пробег</div>
<div class="t" style="left:313px;top:666.69px;font-size:11px;line-height:11px;">4</div>
<div class="t" style="left:542px;top:666.69px;font-size:11px;line-height:11px;">Автомобиль</div>
<div class="t" style="left:16px;width:59px;text-align:right;top:685.69px">5</div>
<div class="t" style="left:84px;top:685.69px;font-size:11px;line-height:11px;">ГосНомер</div>
<div class="t" style="left:313px;top:685.69px;font-size:11px;line-height:11px;">5</div>
<div class="t" style="left:542px;top:685.69px;font-size:11px;line-height:11px;">Автомобиль</div>
<div class="t" style="left:16px;width:59px;text-align:right;top:704.69px">6</div>
<div class="t" style="left:84px;top:704.69px;font-size:11px;line-height:11px;">Фактический адрес</div>
<div class="t" style="left:313px;top:704.69px;font-size:11px;line-height:11px;">7</div>
<div class="t" style="left:542px;top:704.69px;font-size:11px;line-height:11px;">КИ: Адрес</div>
<div class="t" style="left:16px;width:59px;text-align:right;top:723.69px">7</div>
<div class="t" style="left:84px;top:723.69px;font-size:11px;line-height:11px;">Адрес электронной почты (домашний)</div>
<div class="t" style="left:313px;top:723.69px;font-size:11px;line-height:11px;">8</div>
<div class="t" style="left:542px;top:723.69px;font-size:11px;line-height:11px;">КИ: E-mail</div>
<div class="a" style="left:820px;top:607px;width:13px;height:13px;background:#fff;border:1px solid #b3ab85"></div>
<div class="a" style="left:820px;top:626px;width:13px;height:13px;background:#fff;border:1px solid #b3ab85"></div>
<div class="a" style="left:820px;top:645px;width:13px;height:13px;background:#fff;border:1px solid #b3ab85"></div>
<div class="a" style="left:820px;top:664px;width:13px;height:13px;background:#fff;border:1px solid #b3ab85"></div>
<div class="a" style="left:820px;top:683px;width:13px;height:13px;background:#fff;border:1px solid #b3ab85"></div>
<div class="a" style="left:820px;top:702px;width:13px;height:13px;background:#fff;border:1px solid #b3ab85"></div>
<div class="a" style="left:820px;top:721px;width:13px;height:13px;background:#fff;border:1px solid #b3ab85"></div>
<div class="a" style="left:820px;top:740px;width:13px;height:4px;background:#fff;border:1px solid #b3ab85;border-bottom:none"></div>
<div class="a" style="left:997px;top:624px;width:230px;height:18px;background:#4f68c0;outline:1px dotted #000;outline-offset:-1px"></div>
<div class="a" style="left:1227px;top:583px;width:17px;height:162px;background:#f8f6ee;border-left:1px solid #b3ab85;border-right:1px solid #b3ab85;border-top:1px solid #b3ab85"></div>
<div class="a" style="left:1228px;top:584px;width:15px;height:20px;background:linear-gradient(90deg,#fbf9f0,#efe8d0);border-bottom:1px solid #b3ab85"></div>
<svg class="a" style="left:1232px;top:590px" width="9" height="9"><polygon points="0,7 7,7 3.5,0" fill="#c4c0b4"/></svg>
<div class="a" style="left:1228px;top:605px;width:15px;height:78px;background:linear-gradient(90deg,#fbf8ea,#e9e1bd);border-bottom:1px solid #b3ab85"></div>
<div class="a" style="left:1228px;top:683px;width:15px;height:40px;background:linear-gradient(#faf8f2,#f0f0f0);"></div>
<div class="a" style="left:1233px;top:641px;width:5px;height:5px;background:#c4bfa6;border-radius:50%"></div>
<div class="a" style="left:1228px;top:723px;width:15px;height:21px;background:linear-gradient(90deg,#fbf9f0,#efe8d0);border-top:1px solid #b3ab85"></div>
<svg class="a" style="left:1232px;top:730px" width="9" height="9"><polygon points="0,0 7,0 3.5,7" fill="#707070"/></svg>
<div class="a" style="left:4px;top:744px;width:1245px;height:2px;background:#b3ab85;"></div>

<div class="a" style="left:394px;top:389px;width:407px;height:109px;background:#cccccc;"></div>
<div class="a" style="left:800px;top:389px;width:1px;height:109px;background:#6e6e6e;"></div>
<div class="a" style="left:393px;top:497px;width:408px;height:1px;background:#6e6e6e;"></div>
<div class="t" style="left:401px;top:394.84px;font-size:12px;line-height:12px;font-weight:bold;color:#2a2a2a;">Добавить реквизит</div>
<svg class="a" style="left:781px;top:394px" width="13" height="13" viewBox="0 0 13 13"><path d="M1.8 1.8L11.2 11.2M11.2 1.8L1.8 11.2" stroke="#2a2a2a" stroke-width="1.9"/></svg>
<div class="a" style="left:397px;top:410px;width:400px;height:59px;background:#fff;"></div>
<div class="a" style="left:397px;top:469px;width:400px;height:1px;background:#b3ab85;"></div>
<div class="a" style="left:397px;top:470px;width:400px;height:24px;background:#f0f0f0;"></div>
<div class="t" style="left:405px;top:422.69px;font-size:11px;line-height:11px;color:#2a2a2a;">Тип реквизита</div>
<div class="t" style="left:405px;top:446.69px;font-size:11px;line-height:11px;color:#2a2a2a;">Имя реквизита</div>
<div class="a" style="left:518px;top:418px;width:271px;height:19px;background:#fff;border:1px solid #b3ab85"></div>
<div class="a" style="left:773px;top:419px;width:15px;height:17px;background:#f0f0f0;border-left:1px solid #b3ab85"></div>
<svg class="a" style="left:777px;top:426px" width="9" height="6"><polygon points="0.5,0 7.5,0 4,4" fill="#5a4510"/></svg>
<div class="t" style="left:521px;top:422.69px;font-size:11px;line-height:11px;color:#111;">Автомобиль</div>
<div class="a" style="left:518px;top:442px;width:271px;height:19px;background:#fff;border:1px solid #b3ab85"></div>
<div class="a" style="left:773px;top:443px;width:15px;height:17px;background:#f0f0f0;border-left:1px solid #b3ab85"></div>
<svg class="a" style="left:777px;top:450px" width="9" height="6"><polygon points="0.5,0 7.5,0 4,4" fill="#5a4510"/></svg>
<div class="a" style="left:521px;top:445px;width:37px;height:13px;background:#4f68c4;"></div>
<div class="t" style="left:521px;top:445.69px;font-size:11px;line-height:11px;color:#f4f4ff;">Хозяин</div>
<div class="a" style="left:521px;top:444px;width:1px;height:14px;background:#222;"></div>
<div class="a" style="left:518px;top:461px;width:279px;height:104px;background:#fff;border:1px solid #b3ab85"></div>
<div class="a" style="left:519px;top:480px;width:263px;height:18px;background:#4f68c4;"></div>
<div class="a" style="left:519px;top:462px;width:263px;height:102px;overflow:hidden">
<div class="t" style="left:5px;top:2.69px;color:#111">Хозяин</div>
<div class="t" style="left:5px;top:20.69px;color:#eef0ff">Пробег</div>
<div class="t" style="left:5px;top:38.69px;color:#111">ГосНомер</div>
<div class="t" style="left:5px;top:56.69px;color:#111">ТехПаспорт</div>
<div class="t" style="left:5px;top:74.69px;color:#111">ВидАвтомобиля</div>
<div class="t" style="left:5px;top:92.69px;color:#111">ГодовойПробег</div>
</div>
<div class="a" style="left:783px;top:462px;width:13px;height:102px;background:#fff;"></div>
<div class="a" style="left:784px;top:463px;width:11px;height:11px;background:linear-gradient(#fdfcf6,#f2eedc);border:1px solid #ded6b4"></div>
<svg class="a" style="left:785px;top:465px" width="9" height="7" viewBox="0 0 9 7"><path d="M1 5.5L4.5 2L8 5.5" fill="none" stroke="#6a5a30" stroke-width="1.5"/></svg>
<div class="a" style="left:784px;top:475px;width:11px;height:60px;background:linear-gradient(90deg,#f6f4f0,#e8e4dc);border:1px solid #ded6b4"></div>
<div class="a" style="left:784px;top:552px;width:11px;height:11px;background:linear-gradient(#fdfcf6,#f2eedc);border:1px solid #ded6b4"></div>
<svg class="a" style="left:785px;top:554px" width="9" height="7" viewBox="0 0 9 7"><path d="M1 1.5L4.5 5L8 1.5" fill="none" stroke="#6a5a30" stroke-width="1.5"/></svg>

</body></html>
